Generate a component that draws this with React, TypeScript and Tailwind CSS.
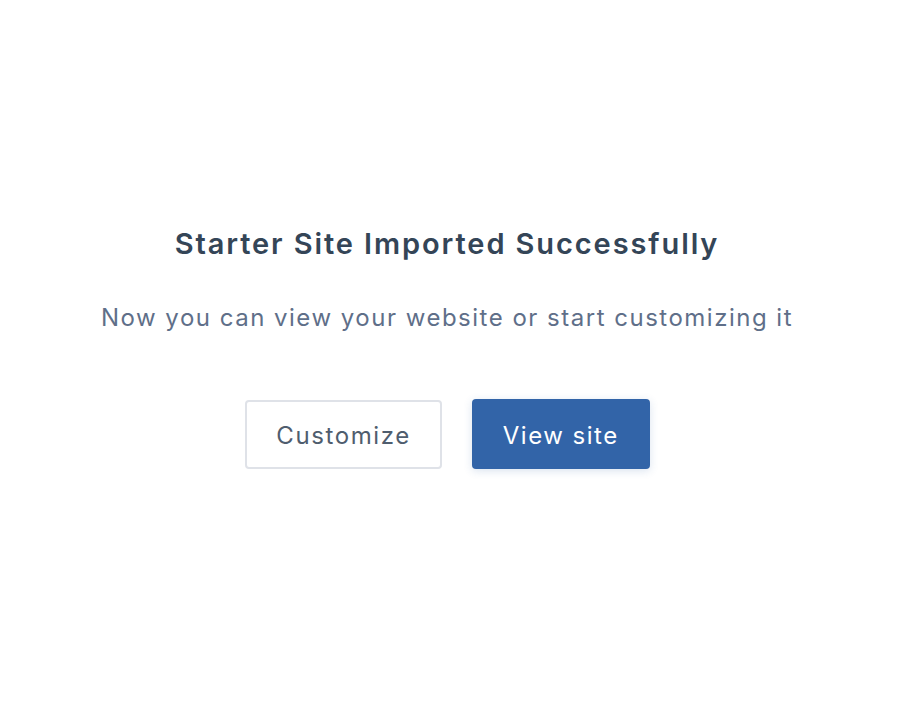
import React from "react";

export default function App() {
  return (
    <div className="min-h-[706px] w-full bg-white flex flex-col items-center pt-[224px] pr-[20px] font-['Inter',sans-serif]">
      <h1 className="text-[29px] leading-[40px] font-semibold text-[#344557] tracking-[1.9px]">
        Starter Site Imported Successfully
      </h1>
      <p className="mt-[39px] text-[24px] leading-[30px] text-[#5f6f89] tracking-[1.5px]">
        Now you can view your website or start customizing it
      </p>
      <div className="mt-[66px] ml-[1px] flex items-center gap-[30px]">
        <button className="h-[69px] px-[29px] pt-[4px] rounded-[4px] border-2 border-[#dfe2e8] bg-white text-[24px] text-[#4f5d6e] tracking-[1.6px]">
          Customize
        </button>
        <button className="h-[70px] px-[31px] pt-[4px] rounded-[4px] bg-[#3264a8] text-[24px] text-white tracking-[1.5px] shadow-[0_2px_8px_rgba(50,100,168,0.18)]">
          View site
        </button>
      </div>
    </div>
  );
}
